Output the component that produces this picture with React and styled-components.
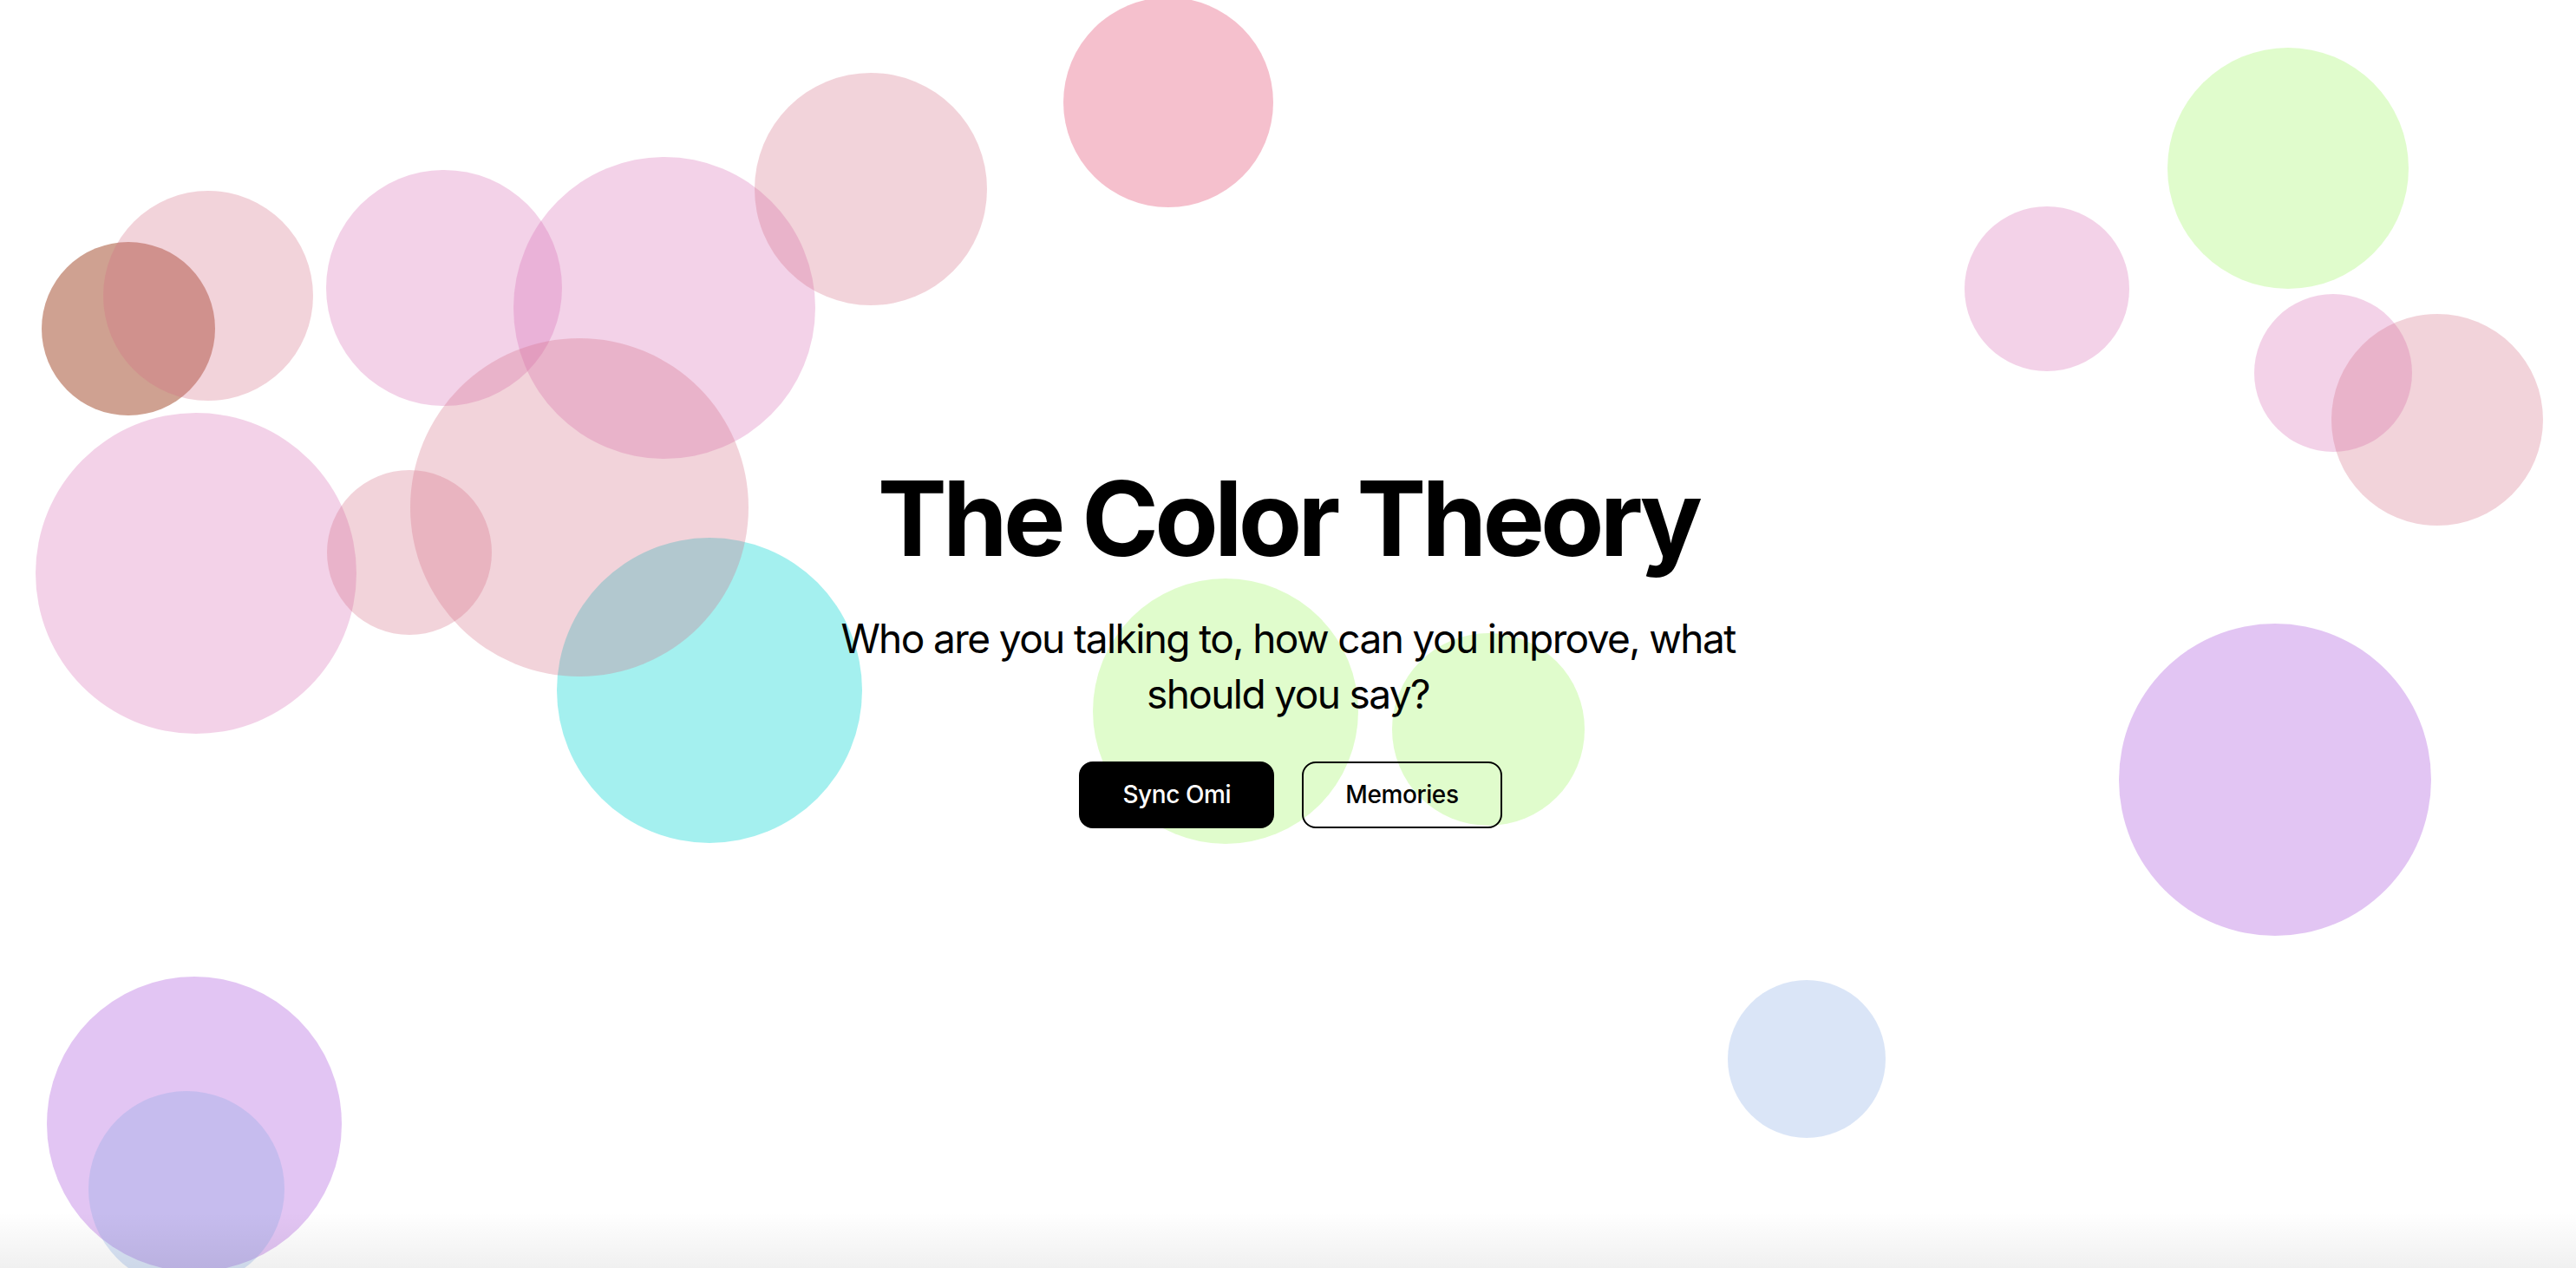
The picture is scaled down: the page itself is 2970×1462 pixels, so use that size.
import React from 'react';
import styled, { createGlobalStyle } from 'styled-components';

const GlobalStyle = createGlobalStyle`
  html, body {
    margin: 0;
    padding: 0;
    background: #ffffff;
  }
  body {
    font-family: Inter, "Noto Sans", "Liberation Sans", sans-serif;
    color: #000;
  }
  * { box-sizing: border-box; }
`;

// bubble positions are the content of the backdrop (centre x, centre y, radius)
const bubbles = [
  { x: 148, y: 379, r: 100, color: 'rgba(159, 67, 35, 0.5)' },
  { x: 240, y: 341, r: 121, color: 'rgba(212, 108, 132, 0.3)' },
  { x: 512, y: 332, r: 136, color: 'rgba(215, 105, 178, 0.3)' },
  { x: 766, y: 355, r: 174, color: 'rgba(215, 105, 178, 0.3)' },
  { x: 226, y: 661, r: 185, color: 'rgba(215, 105, 178, 0.3)' },
  { x: 818, y: 796, r: 176, color: 'rgba(73, 225, 223, 0.5)' },
  { x: 472, y: 637, r: 95, color: 'rgba(212, 108, 132, 0.3)' },
  { x: 668, y: 585, r: 195, color: 'rgba(212, 108, 132, 0.3)' },
  { x: 1004, y: 218, r: 134, color: 'rgba(212, 108, 132, 0.3)' },
  { x: 1347, y: 118, r: 121, color: 'rgba(222, 48, 88, 0.3)' },
  { x: 1413, y: 820, r: 153, color: 'rgba(152, 245, 85, 0.3)' },
  { x: 1716, y: 841, r: 111, color: 'rgba(152, 245, 85, 0.3)' },
  { x: 224, y: 1296, r: 170, color: 'rgba(158, 62, 215, 0.3)' },
  { x: 215, y: 1371, r: 113, color: 'rgba(132, 168, 228, 0.3)' },
  { x: 2083, y: 1221, r: 91, color: 'rgba(132, 168, 228, 0.3)' },
  { x: 2623, y: 899, r: 180, color: 'rgba(158, 62, 215, 0.3)' },
  { x: 2360, y: 333, r: 95, color: 'rgba(215, 105, 178, 0.3)' },
  { x: 2638, y: 194, r: 139, color: 'rgba(152, 245, 85, 0.3)' },
  { x: 2690, y: 430, r: 91, color: 'rgba(215, 105, 178, 0.3)' },
  { x: 2810, y: 484, r: 122, color: 'rgba(212, 108, 132, 0.3)' },
];

const Page = styled.main`
  position: relative;
  min-height: 100vh;
  overflow: hidden;
  display: flex;
  flex-direction: column;
  align-items: center;
  justify-content: center;
  padding-top: 30px;

  &::after {
    content: '';
    position: absolute;
    left: 0;
    right: 0;
    bottom: 0;
    height: 64px;
    background: linear-gradient(to bottom, rgba(0, 0, 0, 0), rgba(0, 0, 0, 0.06));
    pointer-events: none;
  }
`;

const Backdrop = styled.div`
  position: absolute;
  inset: 0;
  pointer-events: none;
`;

const Bubble = styled.span`
  position: absolute;
  border-radius: 50%;
  background: ${(p) => p.$color};
`;

const Hero = styled.section`
  position: relative;
  z-index: 1;
  display: flex;
  flex-direction: column;
  align-items: center;
  text-align: center;
  max-width: 1090px;
`;

const Title = styled.h1`
  margin: 0 0 46px;
  font-size: 120px;
  line-height: 1;
  font-weight: 700;
  letter-spacing: -4.8px;
`;

const Subtitle = styled.p`
  margin: 0 0 46px;
  font-size: 46px;
  line-height: 64px;
  font-weight: 400;
  letter-spacing: -1.6px;
`;

const Actions = styled.div`
  display: flex;
  gap: 32px;
  padding-left: 6px;
`;

const Button = styled.button`
  font-family: inherit;
  font-size: 28px;
  line-height: 39px;
  font-weight: 500;
  letter-spacing: -0.4px;
  padding: 17px 48px;
  border-radius: 16px;
  border: 2px solid #000;
  cursor: pointer;
  background: ${(p) => (p.$primary ? '#000' : 'transparent')};
  color: ${(p) => (p.$primary ? '#fff' : '#000')};
`;

export default function App() {
  return (
    <>
      <GlobalStyle />
      <Page>
        <Backdrop>
          {bubbles.map((b, i) => (
            <Bubble
              key={i}
              $color={b.color}
              style={{ left: b.x - b.r, top: b.y - b.r, width: b.r * 2, height: b.r * 2 }}
            />
          ))}
        </Backdrop>
        <Hero>
          <Title>The Color Theory</Title>
          <Subtitle>Who are you talking to, how can you improve, what should you say?</Subtitle>
          <Actions>
            <Button $primary>Sync Omi</Button>
            <Button>Memories</Button>
          </Actions>
        </Hero>
      </Page>
    </>
  );
}
